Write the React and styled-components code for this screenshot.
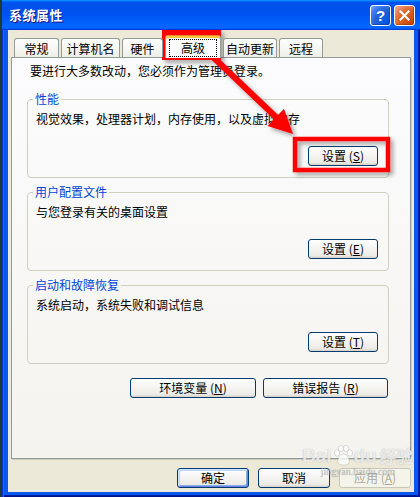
import React from "react";
import styled, { createGlobalStyle } from "styled-components";

const Global = createGlobalStyle`
  html, body { margin: 0; padding: 0; background: #1e3a34; }
  body {
    width: 420px; height: 497px; overflow: hidden;
    font-family: "Noto Sans CJK SC", "Liberation Sans", sans-serif;
    font-size: 12px; color: #000;
  }
  #root { width: 420px; height: 497px; }
`;

const Stage = styled.div`
  position: relative;
  width: 420px;
  height: 497px;
  display: flex;
  padding-left: 2px;
  box-sizing: border-box;
`;

const Window = styled.div`
  flex: 1;
  display: flex;
  flex-direction: column;
  background: #0058ee;
`;

const TitleBar = styled.div`
  height: 30px;
  flex: none;
  display: flex;
  align-items: center;
  padding: 0 5px 0 7px;
  gap: 3px;
  background: linear-gradient(180deg, #0997ff, #0053ee 8%, #0050ee 40%, #06f 88%, #06f 93%, #005bff 95%, #003dd7 96%, #003dd7);
`;

const Title = styled.div`
  flex: 1;
  color: #fff;
  font-weight: bold;
  font-size: 13px;
  letter-spacing: 0.5px;
  text-shadow: 1px 1px #0f1089;
  line-height: 16px;
`;

const CaptionButton = styled.div`
  width: 21px;
  height: 21px;
  box-sizing: border-box;
  border: 1px solid #fff;
  border-radius: 3px;
  display: flex;
  align-items: center;
  justify-content: center;
  color: #fff;
  font-family: "Liberation Sans", sans-serif;
  font-weight: bold;
  font-size: 15px;
  background: ${(p) =>
    p.$kind === "close"
      ? "radial-gradient(circle at 90% 90%, #cc4600 0%, #dc6527 55%, #e98a62 80%, #f5b89c 100%)"
      : "radial-gradient(circle at 90% 90%, #0054e9 0%, #2263d5 55%, #4480f4 80%, #8ab4ff 100%)"};
  box-shadow: inset -1px -1px 1px rgba(0, 0, 0, 0.25);
`;

const Frame = styled.div`
  flex: 1;
  display: flex;
  padding: 0 6px 5px 6px;
  background: #0858ee;
  box-shadow: inset 1px 0 #0831d9, inset 2px 0 #166aee, inset -1px 0 #00138c, inset -2px 0 #001ea0, inset 0 -1px #00138c, inset 0 -2px #001ea0;
`;

const Client = styled.div`
  flex: 1;
  display: flex;
  flex-direction: column;
  padding: 0 3px 4px 3px;
  background: #ece9d8;
`;

const TabStrip = styled.div`
  height: 27px;
  flex: none;
  display: flex;
  align-items: flex-end;
  gap: 2px;
  padding-left: 3px;
  position: relative;
  z-index: 1;
`;

const Tab = styled.div`
  box-sizing: border-box;
  width: ${(p) => p.$w}px;
  height: ${(p) => (p.$active ? 23 : 19)}px;
  margin-bottom: ${(p) => (p.$active ? -1 : 0)}px;
  border: 1px solid #919b9c;
  border-bottom: 0;
  border-top-color: ${(p) => (p.$active ? "#e68b2c" : "#919b9c")};
  border-radius: 3px 3px 0 0;
  display: flex;
  align-items: center;
  justify-content: center;
  padding-top: ${(p) => (p.$active ? 1 : 2)}px;
  line-height: 14px;
  background: ${(p) =>
    p.$active
      ? "#fcfcfe"
      : "linear-gradient(180deg, #fff, #fafaf9 26%, #f0f0ea 95%, #ecebe5)"};
  box-shadow: ${(p) => (p.$active ? "inset 0 2px #ffc73c" : "none")};
`;

const FocusLabel = styled.span`
  outline: 1px dotted #000;
  outline-offset: 1px;
  padding: 0 10px;
`;

const Panel = styled.div`
  box-sizing: border-box;
  height: 402px;
  flex: none;
  border: 1px solid #919b9c;
  background: linear-gradient(180deg, #fcfcfe, #f4f3ee);
  box-shadow: 1px 1px 0 #d0cebf;
  padding: 6px 21px 0 15px;
  display: flex;
  flex-direction: column;
`;

const Intro = styled.div`
  line-height: 14px;
  margin: 0 0 14px 3px;
`;

const Groups = styled.div`
  display: flex;
  flex-direction: column;
  gap: 7px;
`;

const Group = styled.fieldset`
  margin: 0;
  padding: 6px 10px 11px 8px;
  border: 1px solid #d0d0bf;
  border-radius: 4px;
  min-width: 0;
`;

const Legend = styled.legend`
  color: #0046d5;
  padding: 0 2px;
  margin-left: -3px;
  line-height: 14px;
`;

const GroupText = styled.div`
  line-height: 14px;
`;

const ButtonRow = styled.div`
  display: flex;
  justify-content: flex-end;
  gap: ${(p) => p.$gap || 0}px;
  margin-top: ${(p) => p.$top || 0}px;
  padding-right: ${(p) => p.$right || 0}px;
`;

const Button = styled.button`
  box-sizing: border-box;
  width: ${(p) => p.$w}px;
  height: 20px;
  padding: 0;
  border: 1px solid ${(p) => (p.$disabled ? "#c9c7ba" : "#003c74")};
  border-radius: 3px;
  font-family: "Noto Sans CJK SC", "Liberation Sans", sans-serif;
  font-size: 12px;
  line-height: 14px;
  color: ${(p) => (p.$disabled ? "#aca899" : "#000")};
  background: ${(p) =>
    p.$disabled ? "#f5f4ea" : "linear-gradient(180deg, #fff, #ecebe6 86%, #d6d0c5)"};
  box-shadow: ${(p) =>
    p.$default
      ? "inset 1px 1px #cee7ff, inset -1px -1px #6982ee, inset 2px 2px #bcd4f6, inset -2px -2px #89ade4"
      : "none"};
  u { text-decoration: underline; text-underline-offset: 1px; }
`;

const Footer = styled.div`
  display: flex;
  justify-content: flex-end;
  gap: 9px;
  margin-top: 9px;
`;

const Overlay = styled.svg`
  position: absolute;
  left: 0;
  top: 0;
  pointer-events: none;
`;

const Watermark = styled.div`
  position: absolute;
  left: 302px;
  top: 444px;
  display: flex;
  flex-direction: column;
  align-items: center;
  color: rgba(255, 255, 255, 0.75);
  text-shadow: 0 0 1px rgba(120, 120, 120, 0.6);
  pointer-events: none;
`;

const WmTop = styled.div`
  display: flex;
  align-items: flex-end;
  font-family: "Liberation Sans", sans-serif;
  font-weight: bold;
  font-size: 19px;
  line-height: 20px;
  span { font-family: "Noto Sans CJK SC", sans-serif; font-size: 17px; margin-left: 3px; }
`;

const WmSub = styled.div`
  font-family: "Liberation Serif", serif;
  font-size: 10px;
  line-height: 11px;
  color: rgba(200, 200, 200, 0.7);
`;

const groups = [
  { title: "性能", text: "视觉效果，处理器计划，内存使用，以及虚拟内存", key: "S" },
  { title: "用户配置文件", text: "与您登录有关的桌面设置", key: "E" },
  { title: "启动和故障恢复", text: "系统启动，系统失败和调试信息", key: "T" },
];

const tabs = [
  { label: "常规", w: 45 },
  { label: "计算机名", w: 59 },
  { label: "硬件", w: 41 },
  { label: "高级", w: 56, active: true },
  { label: "自动更新", w: 54 },
  { label: "远程", w: 44 },
];

export default function App() {
  return (
    <Stage>
      <Global />
      <Window>
        <TitleBar>
          <Title>系统属性</Title>
          <CaptionButton $kind="help">?</CaptionButton>
          <CaptionButton $kind="close">
            <svg width="11" height="11" viewBox="0 0 11 11">
              <path d="M1.5 1.5 L9.5 9.5 M9.5 1.5 L1.5 9.5" stroke="#fff" strokeWidth="2.2" strokeLinecap="square" />
            </svg>
          </CaptionButton>
        </TitleBar>
        <Frame>
          <Client>
            <TabStrip>
              {tabs.map((t) => (
                <Tab key={t.label} $w={t.w} $active={t.active}>
                  {t.active ? <FocusLabel>{t.label}</FocusLabel> : t.label}
                </Tab>
              ))}
            </TabStrip>
            <Panel>
              <Intro>要进行大多数改动，您必须作为管理员登录。</Intro>
              <Groups>
                {groups.map((g) => (
                  <Group key={g.title}>
                    <Legend>{g.title}</Legend>
                    <GroupText>{g.text}</GroupText>
                    <ButtonRow $top={20}>
                      <Button $w={70}>
                        设置 (<u>{g.key}</u>)
                      </Button>
                    </ButtonRow>
                  </Group>
                ))}
              </Groups>
              <ButtonRow $top={14} $gap={7} $right={1}>
                <Button $w={126}>
                  环境变量 (<u>N</u>)
                </Button>
                <Button $w={125}>
                  错误报告 (<u>R</u>)
                </Button>
              </ButtonRow>
            </Panel>
            <Footer>
              <Button $w={72} $default>确定</Button>
              <Button $w={72}>取消</Button>
              <Button $w={72} $disabled>
                应用 (<u>A</u>)
              </Button>
            </Footer>
          </Client>
        </Frame>
      </Window>
      <Watermark>
        <WmTop>
          Bai
          <svg width="22" height="22" viewBox="0 0 22 22">
            <g fill="rgba(255,255,255,0.75)" stroke="rgba(140,140,140,0.5)" strokeWidth="0.6">
              <ellipse cx="5" cy="9" rx="2.6" ry="3.2" />
              <ellipse cx="9" cy="4.5" rx="2.6" ry="3.2" />
              <ellipse cx="14" cy="4.5" rx="2.6" ry="3.2" />
              <ellipse cx="18" cy="9" rx="2.6" ry="3.2" />
              <path d="M11.5 10 C15 10 19 16 16.5 19.5 C14.5 21.5 8.5 21.5 6.5 19.5 C4 16 8 10 11.5 10Z" />
            </g>
          </svg>
          du<span>经验</span>
        </WmTop>
        <WmSub>jingyan.baidu.com</WmSub>
      </Watermark>
      <Overlay width="420" height="497" viewBox="0 0 420 497">
        <defs>
          <filter id="sh" x="-20%" y="-20%" width="150%" height="150%">
            <feDropShadow dx="3" dy="3" stdDeviation="2" floodColor="#000" floodOpacity="0.35" />
          </filter>
        </defs>
        <g filter="url(#sh)">
          <rect x="164.5" y="32.5" width="54" height="25" fill="none" stroke="#f00" strokeWidth="5" />
          <line x1="214" y1="58" x2="279" y2="120" stroke="#f00" strokeWidth="6" />
          <polygon points="293,134 267.4,126.1 284,108.7" fill="#f00" />
          <rect x="295" y="139" width="93" height="31" fill="none" stroke="#f00" strokeWidth="4.5" />
        </g>
      </Overlay>
    </Stage>
  );
}
